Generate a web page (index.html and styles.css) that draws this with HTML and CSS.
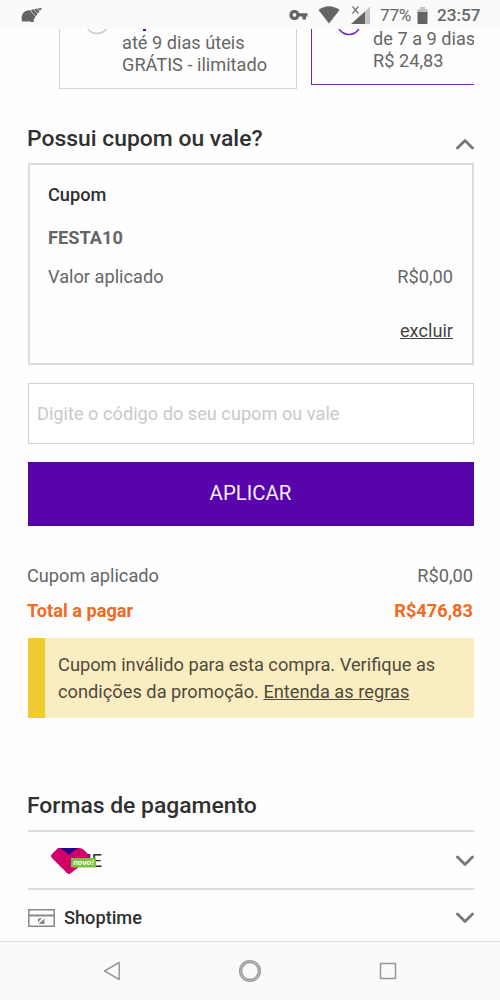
FILE: index.html
```html
<!DOCTYPE html>
<html lang="pt-BR">
<head>
<meta charset="utf-8">
<title>Pagamento</title>
<link rel="stylesheet" href="styles.css">
</head>
<body>
<header class="status">
  <svg class="shell" width="22" height="15" viewBox="0 0 22 15"><path d="M1 13.5C-.2 7.5 2 3 7 2.5L8.500 2 14.500 8.500 12.500 12 13 14H9.500L8.500 13 7.500 13.500Z"/><path d="M9.500 2.200L12.500 1.300 16.500 5.700 14.900 8.200Z M13.200 1.200L15.800.6 18.400 3.600 16.900 5.400Z M16.500.5L21 0 19 3Z"/></svg>
  <svg class="key" width="19" height="12" viewBox="0 0 19 12"><path fill-rule="evenodd" d="M5.500 1A5 5 0 0 1 10.200 4.300H18.500V7.500H17V10.500H13.500V7.500H10.200A5 5 0 1 1 5.500 1ZM5.500 4A1.900 1.900 0 1 0 5.500 7.800 1.900 1.900 0 0 0 5.500 4Z"/></svg>
  <svg class="wifi" width="22" height="18" viewBox="0 0 22 18"><path d="M.5 4Q11-3.500 21.500 4L11 17.500Z"/></svg>
  <svg class="signal" width="20" height="20" viewBox="0 0 20 20"><path class="faint" d="M14 6.500L19 1.500V19H14Z"/><path d="M0 19L14 6.500V19Z"/><path class="cross" d="M1.500 1.500L7.500 8.500M7.500 1.500L1.500 8.500"/></svg>
  <span class="percent">77%</span>
  <svg class="battery" width="11" height="19" viewBox="0 0 11 19"><path class="faint" d="M3 1H8V3H10.500V7H.5V3H3Z"/><path d="M.5 6H10.500V17Q10.500 18 9.500 18H1.500Q.5 18 .5 17Z"/></svg>
  <span class="clock">23:57</span>
</header>
<main class="page">
  <section class="shipping">
    <div class="option">
      <svg class="radio" width="24" height="7" viewBox="0 0 24 7"><circle cx="12" cy="-7" r="11.500"/></svg>
      <p><i class="tail"></i>até 9 dias úteis<br>GRÁTIS - ilimitado</p>
    </div>
    <div class="option selected">
      <svg class="radio" width="24" height="7" viewBox="0 0 24 7"><circle cx="12" cy="-6" r="11.500"/></svg>
      <p>de 7 a 9 dias<br>R$ 24,83</p>
    </div>
  </section>
  <div class="heading">
    <h2>Possui cupom ou vale?</h2>
    <svg class="chevron" width="18" height="12" viewBox="0 0 18 12"><path d="M1.500 10L9 2.500 16.500 10"/></svg>
  </div>
  <section class="coupon">
    <h3>Cupom</h3>
    <strong>FESTA10</strong>
    <div class="row"><span class="value-label">Valor aplicado</span><span class="price">R$0,00</span></div>
    <a class="remove">excluir</a>
  </section>
  <input class="code" type="text" placeholder="Digite o código do seu cupom ou vale">
  <button class="apply">APLICAR</button>
  <div class="row applied"><span>Cupom aplicado</span><span class="price">R$0,00</span></div>
  <div class="row total"><span>Total a pagar</span><span>R$476,83</span></div>
  <div class="alert">Cupom inválido para esta compra. Verifique as<br>condições da promoção. <a>Entenda as regras</a></div>
  <h2 class="payment-title">Formas de pagamento</h2>
  <div class="method">
    <div class="ame"><span>AME</span>
      <svg class="gem" width="48" height="28" viewBox="0 0 48 28"><path class="gem-body" d="M8 1H29Q32 1 34 3L39 8V12L21 26Q19 28 17 26L2 11Q0 9 2 7Z"/><path class="gem-top" d="M10 1H28L19 7.500Z"/><rect class="badge" x="21" y="11" width="25" height="9.500"/><text x="23.200" y="18.300" textLength="20.500" lengthAdjust="spacingAndGlyphs">novo!</text></svg>
    </div>
    <svg class="chevron" width="18" height="12" viewBox="0 0 18 12"><path d="M1.500 2L9 9.500 16.500 2"/></svg>
  </div>
  <div class="method">
    <svg class="card" width="27" height="18" viewBox="0 0 27 18"><path d="M.8.8H26.200V17.200H.8Z"/><path class="stripe" d="M1 6.500H26"/><path class="fill" d="M10 10Q11 9 14 9L10 13.500Z M16.500 9.500V15H10.500Z"/></svg>
    <span class="shop">Shoptime</span>
    <svg class="chevron" width="18" height="12" viewBox="0 0 18 12"><path d="M1.500 2L9 9.500 16.500 2"/></svg>
  </div>
</main>
<nav class="nav">
  <svg width="24" height="24" viewBox="0 0 24 24"><path d="M19.200 3.500V20.500L4.500 12Z"/></svg>
  <svg width="24" height="24" viewBox="0 0 24 24"><circle cx="12" cy="12" r="10.300"/><circle cx="12" cy="12" r="8.500"/></svg>
  <svg width="24" height="24" viewBox="0 0 24 24"><rect x="4.500" y="4.500" width="15" height="15"/></svg>
</nav>
</body>
</html>
```
FILE: styles.css
```css
* { box-sizing: border-box; margin: 0; }
body { width: 500px; height: 1000px; display: flex; flex-direction: column; overflow: hidden; background: #fefefe; color: #666; font: 18.2px/24px Roboto, sans-serif; }
svg { display: block; flex: none; }
.status { height: 29px; flex: none; display: flex; align-items: center; padding: 1px 20px 0 21px; background: #fafafa; fill: #646464; color: #666; }
.shell { margin-right: auto; }
.key { margin-right: 10px; }
.wifi { margin-right: 11px; }
.signal { margin-right: 9px; }
.faint { fill: #c4c4c4; }
.cross { stroke: #777; stroke-width: 1.3; }
.percent { width: 32px; font-size: 17.3px; letter-spacing: -.3px; white-space: nowrap; }
.battery { margin: 0 9px 0 5px; }
.clock { width: 43px; font-size: 17.2px; font-weight: 500; white-space: nowrap; }
.page { flex: 1; min-height: 0; overflow: hidden; padding: 0 26px 0 28px; display: flex; flex-direction: column; }
.page > * { flex: none; }
.shipping { height: 60px; padding-left: 31px; display: flex; gap: 14px; align-items: flex-start; overflow: hidden; }
.option { width: 238px; height: 60px; flex: none; display: flex; border: 1px solid #d4d4d4; border-top: 0; padding-left: 25px; line-height: 22px; }
.option p { padding: 3px 0 0 13px; position: relative; white-space: nowrap; }
.tail { position: absolute; left: 34px; top: 0; width: 3px; height: 2px; background: #5a05ac; }
.radio { fill: none; stroke: #ccc; stroke-width: 1.5; }
.option.selected { height: 56px; border-color: #7527c4; }
.selected p { padding: 0 0 0 12px; margin-top: -1px; }
.selected .radio { stroke: #6f25bc; }
.heading { height: 74px; padding-top: 35px; display: flex; justify-content: space-between; }
h2 { margin-left: -1px; font-size: 22.9px; line-height: 30px; font-weight: 500; color: #303030; white-space: nowrap; }
.chevron { fill: none; stroke: #777; stroke-width: 2.8; stroke-linecap: round; stroke-linejoin: round; }
.heading .chevron { margin-top: 14px; }
.coupon { height: 202px; border: 2px solid #dcdcdc; padding: 18px 19px 0 18px; display: flex; flex-direction: column; }
h3 { font-size: 18.2px; line-height: 24px; font-weight: 500; color: #303030; }
.coupon strong { margin: 19px 0 15px; font-weight: 700; }
.row { display: flex; justify-content: space-between; }
.remove { align-self: flex-end; margin-top: 30px; color: #444; text-decoration: underline; }
.code { height: 61px; margin-top: 18px; padding: 0 8px 1px; border: 1px solid #d0d0d0; border-radius: 0; background: #fff; font: inherit; }
.code::placeholder { color: #c9c9c9; opacity: 1; }
.apply { height: 64px; margin: 18px 0 38px; padding: 0 1px 2px 0; border: 1px solid #4c0795; border-radius: 0; background: #5903aa; color: #f6f0fa; font: 20.4px Roboto, sans-serif; }
.applied, .total { margin-left: -1px; margin-right: 1px; }
.total { margin-top: 11px; font-weight: 700; color: #f26a21; }
.alert { height: 80px; margin-top: 15px; border-left: 17px solid #f1c933; padding: 13px 0 0 13px; background: #faedc1; color: #504a3b; font-size: 18.25px; line-height: 27px; white-space: nowrap; }
.alert a { text-decoration: underline; }
.payment-title { margin-top: 73px; padding-bottom: 9px; }
.method { height: 57px; border-top: 2px solid #dcdcdc; display: flex; align-items: center; color: #303030; font-weight: 500; }
.payment-title + .method { height: 58px; padding-top: 1px; }
.method .chevron { margin-left: auto; }
.ame { position: relative; padding-left: 36px; font-weight: 400; }
.gem { position: absolute; left: 22px; top: -2px; }
.gem-body { fill: #d10068; }
.gem-top { fill: #240086; }
.badge { fill: #7ac142; }
.gem text { fill: #fff; font: italic 700 7.5px "Liberation Sans", sans-serif; }
.card { fill: none; stroke: #888; stroke-width: 1.5; margin-right: 9px; }
.card .stripe { stroke-width: 2; }
.card .fill { fill: #888; stroke: none; }
.nav { height: 59px; flex: none; border-top: 1px solid #dedede; padding: 0 100px; background: #fafafa; display: flex; justify-content: space-between; align-items: center; }
.nav svg { fill: none; stroke: #999; stroke-width: 1.5; stroke-linejoin: round; }
```
